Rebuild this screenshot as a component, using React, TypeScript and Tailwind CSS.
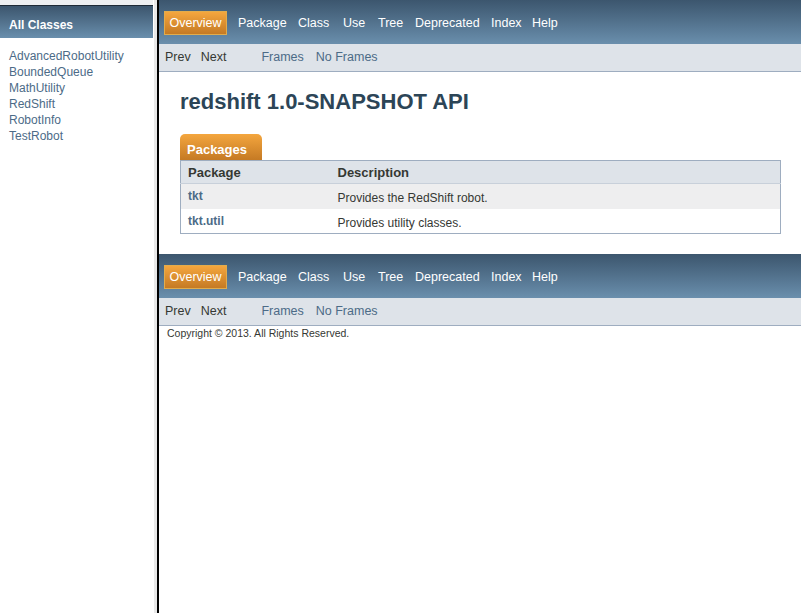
const classes = [
  "AdvancedRobotUtility",
  "BoundedQueue",
  "MathUtility",
  "RedShift",
  "RobotInfo",
  "TestRobot",
]

const navItems: [string, string][] = [
  ["Package", "w-[60px]"],
  ["Class", "w-[45px]"],
  ["Use", "w-[35px]"],
  ["Tree", "w-[37px]"],
  ["Deprecated", "w-[76px]"],
  ["Index", "w-[41px]"],
  ["Help", "w-[40px]"],
]

const packages = [
  { name: "tkt", desc: "Provides the RedShift robot." },
  { name: "tkt.util", desc: "Provides utility classes." },
]

function NavBar() {
  return (
    <div>
      <div className="flex h-[44px] items-start bg-linear-to-b from-[#3c566e] to-[#6a8fad] pl-[5px] pt-[11px] text-[12.5px] text-white">
        <div className="flex h-[24px] w-[63px] items-center justify-center border border-[#e2ac4c] bg-linear-to-b from-[#f4a63e] to-[#c57a24]">
          Overview
        </div>
        <ul className="ml-[11px] flex h-[24px] items-center">
          {navItems.map(([label, w]) => (
            <li key={label} className={w}>
              {label}
            </li>
          ))}
        </ul>
      </div>
      <div className="flex h-[28px] items-center border-b border-[#9eadc0] bg-[#dee3e9] pb-[1px] pl-[6px] text-[12.5px]">
        <span className="text-[#353833]">Prev</span>
        <span className="ml-[10px] text-[#353833]">Next</span>
        <span className="ml-[35px] text-[#4c6b87]">Frames</span>
        <span className="ml-[12px] text-[#4c6b87]">No Frames</span>
      </div>
    </div>
  )
}

export default function App() {
  return (
    <div className="flex h-[613px] w-[801px] overflow-hidden bg-white font-['Liberation_Sans',Arial,sans-serif] text-[#353833]">
      {/* class list frame */}
      <aside className="flex w-[153px] flex-col">
        <div className="h-[5px] bg-[#eef0f2]" />
        <h1 className="flex h-[33px] items-center border-t border-[#1e2a36] bg-linear-to-b from-[#3c566e] to-[#6a8fad] pl-[9px] pt-[5px] text-[12px] font-bold text-white">
          All Classes
        </h1>
        <ul className="mt-[10px] pl-[9px] text-[12px] leading-[16px] text-[#4c6b87]">
          {classes.map((c) => (
            <li key={c}>{c}</li>
          ))}
        </ul>
      </aside>

      {/* frameset divider */}
      <div className="w-[4px] border-l border-white bg-[#e8e8e8]" />

      {/* main frame */}
      <main className="flex-1 border-l-2 border-black">
        <NavBar />

        <div className="pl-[21px] pr-[20px]">
          <h1 className="mt-[17px] text-[22px] font-bold leading-[26px] text-[#2c4557]">
            redshift 1.0-SNAPSHOT API
          </h1>

          <div className="mt-[19px]">
            <div className="flex h-[26px] w-[82px] items-center rounded-t-[5px] bg-linear-to-b from-[#f4a63e] to-[#c57a24] pl-[7px] pt-[6px] text-[13px] font-bold text-white">
              Packages
            </div>
            <table className="w-full border-collapse border border-[#9eadc0] text-[12px]">
              <thead>
                <tr className="h-[23px] border-b border-[#c8d0da] bg-[#dee3e9] text-[13px] font-bold">
                  <th className="w-[150px] pl-[7px] pt-[1px] text-left">Package</th>
                  <th className="pl-[7px] pt-[1px] text-left">Description</th>
                </tr>
              </thead>
              <tbody>
                {packages.map((p, i) => (
                  <tr
                    key={p.name}
                    className={i % 2 === 0 ? "h-[25px] bg-[#eeeeef]" : "h-[25px] bg-white"}
                  >
                    <td className="pl-[7px] font-bold text-[#4c6b87]">{p.name}</td>
                    <td className="pl-[7px] pt-[4px]">{p.desc}</td>
                  </tr>
                ))}
              </tbody>
            </table>
          </div>
        </div>

        <div className="mt-[20px]">
          <NavBar />
        </div>
        <p className="pl-[8px] text-[10.5px] leading-[14px] text-[#353833]">
          Copyright © 2013. All Rights Reserved.
        </p>
      </main>
    </div>
  )
}
